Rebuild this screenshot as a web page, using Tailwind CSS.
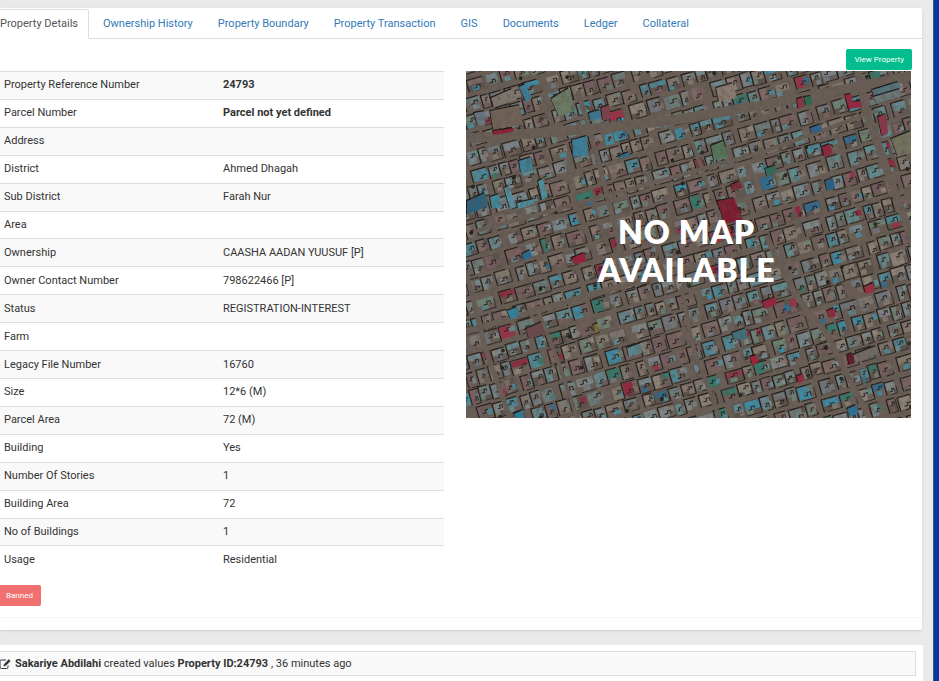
<!DOCTYPE html>
<html lang="en">
<head>
    <meta charset="UTF-8">
    <meta name="viewport" content="width=device-width, initial-scale=1.0">
    <title>Property Details</title>
    <script src="https://cdn.jsdelivr.net/npm/@tailwindcss/browser@4"></script>
</head>

<body class="bg-[#eaeaea] text-[#333] font-[Roboto,sans-serif] text-[11px] leading-4 min-h-screen flex overflow-x-hidden">

    <main class="grow min-w-0 pt-2 pr-[11px]">

        <!-- Property card -->
        <section class="bg-white rounded-r-xs shadow-sm mr-px pb-3">
            <nav class="border-b border-[#ddd]">
                <ul class="flex gap-[3px] -ml-[11px] -mb-px pt-px">
                    <li><a href="#details" class="block border border-[#ddd] border-b-white rounded-t-xs bg-white text-[#555] px-[10px] py-[6px]">Property Details</a></li>
                    <li><a href="#ownership" class="block border border-transparent text-[#337ab7] px-[10px] py-[6px]">Ownership History</a></li>
                    <li><a href="#boundary" class="block border border-transparent text-[#337ab7] px-[10px] py-[6px]">Property Boundary</a></li>
                    <li><a href="#transaction" class="block border border-transparent text-[#337ab7] px-[10px] py-[6px]">Property Transaction</a></li>
                    <li><a href="#gis" class="block border border-transparent text-[#337ab7] px-[10px] py-[6px]">GIS</a></li>
                    <li><a href="#documents" class="block border border-transparent text-[#337ab7] px-[10px] py-[6px]">Documents</a></li>
                    <li><a href="#ledger" class="block border border-transparent text-[#337ab7] px-[10px] py-[6px]">Ledger</a></li>
                    <li><a href="#collateral" class="block border border-transparent text-[#337ab7] px-[10px] py-[6px]">Collateral</a></li>
                </ul>
            </nav>

            <div class="border-b border-[#f7f7f7] pt-[10px] pr-[11px] pb-[11px]">
                <div class="flex justify-end -mr-px mb-px">
                    <button type="button" class="bg-[#03bd8e] text-white text-[8px] leading-3 rounded-xs px-2 py-1 h-[21px]">View Property</button>
                </div>

                <div class="grid grid-cols-[444fr_445fr] gap-[22px] items-start">
                    <table class="w-full h-[502px] text-left">
                        <tbody>
                            <tr class="border-t border-[#ddd] bg-[#f9f9f9]"><th scope="row" class="w-1/2 pl-1 font-normal">Property Reference Number</th><td class="pl-px font-bold">24793</td></tr>
                            <tr class="border-t border-[#ddd]"><th scope="row" class="pl-1 font-normal">Parcel Number</th><td class="pl-px font-bold">Parcel not yet defined</td></tr>
                            <tr class="border-t border-[#ddd] bg-[#f9f9f9]"><th scope="row" class="pl-1 font-normal">Address</th><td class="pl-px"></td></tr>
                            <tr class="border-t border-[#ddd]"><th scope="row" class="pl-1 font-normal">District</th><td class="pl-px">Ahmed Dhagah</td></tr>
                            <tr class="border-t border-[#ddd] bg-[#f9f9f9]"><th scope="row" class="pl-1 font-normal">Sub District</th><td class="pl-px">Farah Nur</td></tr>
                            <tr class="border-t border-[#ddd]"><th scope="row" class="pl-1 font-normal">Area</th><td class="pl-px"></td></tr>
                            <tr class="border-t border-[#ddd] bg-[#f9f9f9]"><th scope="row" class="pl-1 font-normal">Ownership</th><td class="pl-px">CAASHA AADAN YUUSUF [P]</td></tr>
                            <tr class="border-t border-[#ddd]"><th scope="row" class="pl-1 font-normal">Owner Contact Number</th><td class="pl-px">798622466 [P]</td></tr>
                            <tr class="border-t border-[#ddd] bg-[#f9f9f9]"><th scope="row" class="pl-1 font-normal">Status</th><td class="pl-px">REGISTRATION-INTEREST</td></tr>
                            <tr class="border-t border-[#ddd]"><th scope="row" class="pl-1 font-normal">Farm</th><td class="pl-px"></td></tr>
                            <tr class="border-t border-[#ddd] bg-[#f9f9f9]"><th scope="row" class="pl-1 font-normal">Legacy File Number</th><td class="pl-px">16760</td></tr>
                            <tr class="border-t border-[#ddd]"><th scope="row" class="pl-1 font-normal">Size</th><td class="pl-px">12*6 (M)</td></tr>
                            <tr class="border-t border-[#ddd] bg-[#f9f9f9]"><th scope="row" class="pl-1 font-normal">Parcel Area</th><td class="pl-px">72 (M)</td></tr>
                            <tr class="border-t border-[#ddd]"><th scope="row" class="pl-1 font-normal">Building</th><td class="pl-px">Yes</td></tr>
                            <tr class="border-t border-[#ddd] bg-[#f9f9f9]"><th scope="row" class="pl-1 font-normal">Number Of Stories</th><td class="pl-px">1</td></tr>
                            <tr class="border-t border-[#ddd]"><th scope="row" class="pl-1 font-normal">Building Area</th><td class="pl-px">72</td></tr>
                            <tr class="border-t border-[#ddd] bg-[#f9f9f9]"><th scope="row" class="pl-1 font-normal">No of Buildings</th><td class="pl-px">1</td></tr>
                            <tr class="border-t border-[#ddd]"><th scope="row" class="pl-1 font-normal">Usage</th><td class="pl-px">Residential</td></tr>
                        </tbody>
                    </table>

                    <div class="relative">
                        <svg id="map" viewBox="0 0 445 347" preserveAspectRatio="xMidYMid slice" class="block w-full" role="img" aria-label="Aerial view of the town"></svg>
                        <p class="absolute inset-0 flex flex-col items-center justify-center text-center text-white font-[Lato,sans-serif] font-extrabold text-[32px] leading-[38px] tracking-wide pt-3 pr-1">
                            <span>NO MAP</span>
                            <span>AVAILABLE</span>
                        </p>
                    </div>
                </div>

                <button type="button" class="block bg-[#f06f6f] text-white text-[8px] leading-3 rounded-r-xs pl-[6px] pr-2 h-[21px] mt-3">Banned</button>
            </div>
        </section>

        <!-- Activity log -->
        <section class="bg-white mt-[15px] pt-[6px] pr-[7px] pb-2">
            <div class="flex items-center border border-l-0 border-[#ddd] bg-[#f9f9f9] h-[25px]">
                <svg viewBox="0 0 12 12" class="w-3 h-3 mr-1 -ml-px shrink-0" fill="none" stroke="#333">
                    <path d="M7 2H2.5Q1 2 1 3.5V9Q1 10.500 2.500 10.500H7.500Q9 10.500 9 9V7.500"/>
                    <path d="M4.500 8.500L5 6.300L9.700 1.300L11.500 3L6.700 8Z" fill="#333" stroke="none"/>
                    <path d="M5.500 6.800L6.400 7.700" stroke="#f9f9f9" stroke-width=".6"/>
                </svg>
                <p><b>Sakariye Abdilahi</b> created values <b>Property ID:24793</b> , 36 minutes ago</p>
            </div>
        </section>
    </main>

    <div class="w-[6px] shrink-0 bg-[#0638a0] border-l border-[#3d5580] -ml-px"></div>

    <script>
        // Town plan: rows of walled compounds on a tilted street grid
        let seed = 24793;
        const rnd = () => {
            seed = (seed * 1664525 + 1013904223) >>> 0;
            return seed / 4294967296;
        };
        const pick = list => list[Math.floor(rnd() * list.length)];
        const n = v => v.toFixed(1);
        const roofs = ['#7d7670', '#83756d', '#6c7a78', '#74868a', '#64868c', '#4d8794', '#7d6866', '#745c5f', '#6d8074', '#7c8286', '#80796c', '#8b8176', '#5f898c', '#70757a', '#7d8684', '#7a5f60'];
        const accents = ['#8d2a40', '#2f6c92', '#3d8ba3', '#9a3148', '#35796a', '#3d8ba3'];
        const yards = ['#625850', '#685e56', '#5c524b', '#6b6159'];
        const rect = (x, y, w, h, fill) => `<rect x="${n(x)}" y="${n(y)}" width="${n(w)}" height="${n(h)}" fill="${fill}"/>`;
        const line = (d, stroke, width) => `<path d="${d}" fill="none" stroke="${stroke}" stroke-width="${width}"/>`;
        const roof = () => rnd() > .91 ? pick(accents) : pick(roofs);

        let houses = '';
        for (let y = -80; y < 480;) {
            const h = 12 + rnd() * 3;
            let x = -120 + rnd() * 40;
            let block = 0;
            while (x < 480) {
                const w = 9 + rnd() * 10;
                const top = y + (rnd() - .5) * 2;
                houses += rect(x, top, w, h, pick(yards));
                // main roof against one wall, smaller ones round the yard
                if (rnd() > .5) {
                    houses += rect(x + 1, top + 1, w * (.35 + rnd() * .5), h - 2, roof());
                    houses += rect(x + w * .6, top + h * rnd() * .5, w * .35, h * .4, roof());
                } else {
                    houses += rect(x + 1, top + 1, w - 2, h * (.35 + rnd() * .3), roof());
                    houses += rect(x + w * rnd() * .5, top + h * .6, w * .4, h * .35, roof());
                }
                // stepped shadows inside the yard
                let px = x + w * (.2 + rnd() * .2);
                const py = top + h * (.4 + rnd() * .4);
                houses += line(`M${n(px)} ${n(py)}h${n(w * .2)}v-${n(h * .2)}h${n(w * .2)}v${n(h * .3 * rnd())}`, '#26211d', 1);
                if (rnd() > .2) houses += line(`M${n(x)} ${n(top + h)}V${n(top)}H${n(x + w * (.7 + rnd() * .3))}`, '#1f1a17', 1.1);
                if (rnd() > .4) houses += line(`M${n(x + w * rnd() * .5)} ${n(top + h)}H${n(x + w)}v-${n(h * rnd())}`, '#2b2520', .9);
                if (rnd() > .9) houses += `<circle cx="${n(x + w * rnd())}" cy="${n(top + h * rnd())}" r="2" fill="#20241a"/>`;
                x += w;
                block += w;
                if (block > 70) { x += 6; block = 0; } else if (rnd() > .8) { x += 2; }
            }
            y += h + 2 + rnd() * 4;
        }

        // Main roads, then the larger buildings
        const roads = [
            ['M-5 68C60 62 150 58 220 47S330 28 450 4', 10],
            ['M112 20L121 50L135 100L160 200', 5],
            ['M392 0L400 40L425 110L450 180', 8],
            ['M222 60L262 170', 4],
            ['M300 165L330 225L360 262L405 350', 6],
            ['M-5 262L120 225L290 178', 6],
            ['M0 200L20 280L45 350', 5],
            ['M70 235L92 290L112 350', 4],
            ['M215 215L228 280L255 350', 4],
            ['M10 160L150 122L300 80L410 40', 4]
        ].map(([d, w]) => line(d, '#695e56', w)).join('');

        const big = [
            ['85,28 103,17 109,40 93,46', '#6b7a62'],
            ['53,16 59,13 66,27 60,31', '#3a7d96'],
            ['25,27 46,18 51,29 28,36', '#7d766f'],
            ['24,40 54,34 57,54 27,58', '#706256'],
            ['27,60 47,57 47,61 28,64', '#8f1f38'],
            ['8,42 19,40 19,54 12,55', '#647681'],
            ['106,69 121,65 122,84 107,86', '#3b7f9b'],
            ['123,42 134,39 136,47 124,50', '#3a7994'],
            ['135,37 143,34 145,47 137,50', '#7e3f4a'],
            ['1,130 19,122 22,135 1,144', '#2f607b'],
            ['24,126 33,123 36,136 26,138', '#3f8899'],
            ['38,117 43,115 50,136 44,138', '#5391a0'],
            ['51,132 68,128 69,133 52,138', '#4e8e9b'],
            ['72,110 77,108 82,126 76,129', '#4e8e9b'],
            ['53,90 65,86 67,98 55,102', '#3c8197'],
            ['153,85 163,81 164,85 154,88', '#2f6e90'],
            ['251,130 268,127 277,149 259,153', '#7d1a30'],
            ['245,75 257,70 262,86 248,90', '#52775a'],
            ['250,17 267,12 271,27 253,31', '#86796d'],
            ['331,28 337,26 339,35 332,38', '#8c3142'],
            ['338,26 345,25 346,33 340,35', '#2c6b50'],
            ['379,24 385,23 387,31 395,30 396,36 383,38', '#9b2440'],
            ['406,19 432,11 435,17 408,26', '#54747d'],
            ['407,26 434,18 436,25 411,33', '#6b7778'],
            ['412,46 420,43 422,62 416,66', '#893748'],
            ['425,68 445,60 445,82 432,86', '#74725f'],
            ['344,57 355,53 356,60 346,63', '#2f648c'],
            ['356,76 364,73 367,83 358,86', '#8c2539'],
            ['299,98 310,94 311,101 301,106', '#2f6b59'],
            ['359,110 367,107 369,117 361,120', '#27618b'],
            ['265,114 274,110 277,117 267,120', '#7d2430'],
            ['106,187 118,182 120,190 109,194', '#961f3d'],
            ['60,258 76,251 79,263 63,268', '#6b474b'],
            ['41,240 51,236 54,244 45,249', '#338299'],
            ['127,254 132,252 133,260 129,262', '#7b6d31'],
            ['56,183 64,179 66,186 58,189', '#256992'],
            ['296,231 309,226 311,233 299,238', '#94243d'],
            ['361,240 368,237 370,245 364,247', '#94243d'],
            ['398,216 407,212 409,220 400,223', '#a02b3a'],
            ['387,284 410,275 412,283 389,292', '#746b65'],
            ['381,284 386,282 389,292 383,294', '#5f1c2c'],
            ['284,286 290,284 293,290 287,295', '#a32036'],
            ['331,305 337,303 339,310 332,312', '#992440'],
            ['266,262 280,257 282,267 268,270', '#416f7b'],
            ['161,277 175,272 176,282 163,286', '#5b858b'],
            ['381,338 390,334 393,342 384,346', '#2c7396'],
            ['48,343 57,339 58,347 49,347', '#2d7e9b']
        ].map(([p, fill]) => `<polygon points="${p}" fill="#181513" transform="translate(-1 -1)"/><polygon points="${p}" fill="${fill}"/>`).join('');

        document.getElementById('map').innerHTML = `
            <filter id="grain" x="0" y="0" width="100%" height="100%">
                <feTurbulence type="fractalNoise" baseFrequency=".2" numOctaves="2" seed="3"/>
                <feColorMatrix values="0 0 0 0 .1  0 0 0 0 .08  0 0 0 0 .07  1.2 0 0 0 -.5"/>
            </filter>
            <rect width="445" height="347" fill="#695e56"/>
            <g transform="rotate(-16)">${houses}</g>
            ${roads}${big}
            <rect width="445" height="347" filter="url(#grain)"/>`;
    </script>
</body>
</html>
